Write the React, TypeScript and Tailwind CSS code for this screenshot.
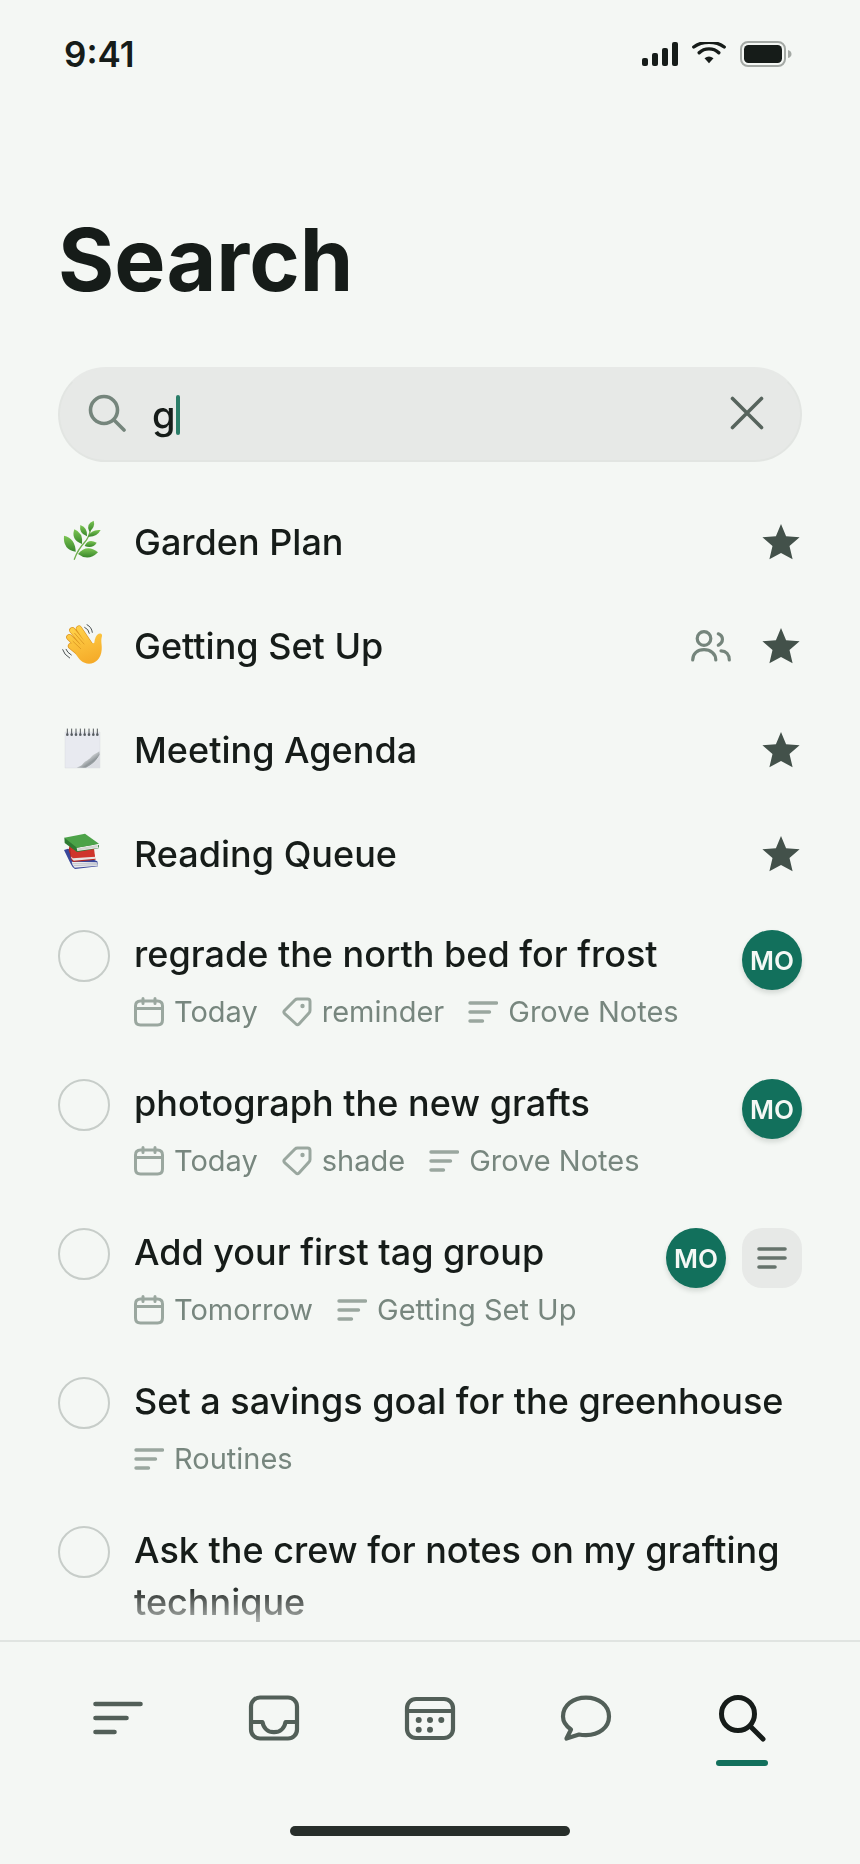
import { useState } from 'react'
import type { ReactNode } from 'react'

type MetaKind = 'date' | 'tag' | 'list'

interface Doc {
  title: string
  icon: ReactNode
  shared?: boolean
}

interface Task {
  title: string
  meta: { kind: MetaKind; label: string }[]
  assignee?: string
  hasNote?: boolean
}

function HerbIcon() {
  return (
    <svg viewBox="0 0 132 132" className="size-11" aria-hidden="true">
      <defs>
        <linearGradient id="leaf" x1="0" y1="0" x2="0" y2="1">
          <stop offset="0" stopColor="#7cc653" />
          <stop offset="1" stopColor="#37852a" />
        </linearGradient>
      </defs>
      <path d="M43 118Q54 88 74 67Q86 54 92 28" fill="none" stroke="#6fae4c" strokeWidth="4" strokeLinecap="round" />
      <g fill="url(#leaf)">
        <path d="M88 35Q76 12 101 2Q107 20 88 35Z" />
        <path d="M84 50Q94 27 122 30Q110 52 84 50Z" />
        <path d="M81 49Q56 40 61 15Q84 24 81 49Z" />
        <path d="M66 72Q32 60 43 28Q70 38 66 72Z" />
        <path d="M47 95Q8 88 12 47Q46 55 47 95Z" />
        <path d="M74 78Q84 55 110 68Q98 87 74 78Z" />
        <path d="M54 102Q80 70 114 97Q85 126 54 102Z" />
      </g>
    </svg>
  )
}

function WaveIcon() {
  return (
    <svg viewBox="0 0 132 132" className="size-11" aria-hidden="true">
      <defs>
        <linearGradient id="hand" gradientUnits="userSpaceOnUse" x1="50" y1="5" x2="90" y2="120">
          <stop offset="0" stopColor="#ffd24a" />
          <stop offset="1" stopColor="#f5aa28" />
        </linearGradient>
      </defs>
      <g fill="none" strokeLinecap="round">
        <path d="M57 14L92 66M37 19L80 72M28 40L72 84M33 66L74 100" stroke="#dd9620" strokeWidth="19" />
        <path d="M57 14L92 66M37 19L80 72M28 40L72 84M33 66L74 100" stroke="url(#hand)" strokeWidth="15" />
      </g>
      <path d="M60 62L86 50Q95 63 103 56Q105 35 116 29Q127 26 126 36C121 53 127 62 125 78C123 103 107 119 87 119C68 119 56 105 47 90Z" fill="url(#hand)" />
      <path d="M44 28L72 60M39 52L62 74" fill="none" stroke="#e09d26" strokeWidth="3" strokeLinecap="round" />
      <g fill="none" stroke="#4b5152" strokeWidth="3" strokeLinecap="round">
        <path d="M81 2Q95 9 97 25M74 10Q86 15 88 28M8 77Q12 92 29 102M18 76Q21 85 34 93" />
      </g>
    </svg>
  )
}

function NotepadIcon() {
  const rings = [22, 35, 48, 61, 74, 87, 100, 112]
  return (
    <svg viewBox="0 0 132 132" className="size-11" aria-hidden="true">
      <defs>
        <linearGradient id="curl" x1="0" y1="0" x2="1" y2="1">
          <stop offset="0.3" stopColor="#f9fafc" />
          <stop offset="0.65" stopColor="#8f9699" />
          <stop offset="1" stopColor="#e3e5e9" />
        </linearGradient>
      </defs>
      <path d="M15 12H120V120H15Z" fill="#e8eaf0" stroke="#d5d8de" strokeWidth="1" />
      <path d="M118 70C108 78 102 78 96 84C88 96 76 98 70 106C65 114 58 116 50 119H78C96 112 112 94 119 80Z" fill="url(#curl)" />
      <path d="M119 82C110 98 96 112 80 120H120Z" fill="#dcdee3" />
      {rings.map((x) => (
        <g key={x}>
          <circle cx={x} cy="20" r="4" fill="#5d6368" />
          <path d={`M${x} 3V19`} stroke="#53585c" strokeWidth="3" strokeLinecap="round" />
        </g>
      ))}
    </svg>
  )
}

function BooksIcon() {
  return (
    <svg viewBox="0 0 132 132" className="size-11" aria-hidden="true">
      <path d="M12 54L24 50L112 88L114 103L45 111Q38 108 32 95Z" fill="#39479a" />
      <path d="M35 89L110 91L114 101L44 107Q36 98 35 89Z" fill="#e9eaec" />
      <path d="M37 95L111 95M41 101L112 98" stroke="#abb0bc" strokeWidth="2" />
      <path d="M29 39L98 50L107 83L40 90Q31 84 31 70L26 54Z" fill="#b72822" />
      <path d="M33 74L104 73L107 80L41 86Q34 82 33 74Z" fill="#e8e4e1" />
      <path d="M29 39L102 49L105 74L38 79Q31 72 33 64Z" fill="#cf352b" />
      <path d="M13 17L14 33L51 60L116 49L117 40Z" fill="#2f7a31" />
      <path d="M50 47L115 36Q111 43 116 48L52 57Z" fill="#eceeea" />
      <path d="M52 51L112 41M52 54L113 44" stroke="#b6bab5" strokeWidth="1.5" />
      <path d="M13 17L75 5L117 35L51 47Z" fill="#4ca348" />
    </svg>
  )
}

function StarIcon() {
  return (
    <svg viewBox="0 0 38 38" className="size-9.5 text-[#43514a]" aria-hidden="true">
      <path d="M19 1L24.1 13.2L37.6 14.2L27.5 22.9L30.6 36.2L19 30L7.4 36.2L10.5 22.9L0.4 14.2L13.9 13.2Z" fill="currentColor" />
    </svg>
  )
}

function PeopleIcon() {
  return (
    <svg viewBox="0 0 40 32" className="h-8 w-10 text-[#75857c]" fill="none" stroke="currentColor" strokeWidth="3.2" strokeLinecap="round" aria-hidden="true">
      <circle cx="13" cy="8.5" r="6.8" />
      <path d="M1.7 30C1.7 23.5 6.5 19.7 13 19.7S24.8 23.5 24.8 30" />
      <path d="M27.3 3.8C32.8 6 32.8 12.5 27.3 15.2M30 20.8C35 21 38.3 24.5 38.3 30" />
    </svg>
  )
}

function MetaIcon({ kind }: { kind: MetaKind }) {
  return (
    <svg
      viewBox="0 0 30 30"
      className="size-7.5 shrink-0 text-[#9aa79f]"
      fill="none"
      stroke="currentColor"
      strokeWidth="3"
      strokeLinecap="round"
      strokeLinejoin="round"
      aria-hidden="true"
    >
      {kind === 'date' && <path d="M6.5 4H23.5Q28.5 4 28.5 9V23Q28.5 28 23.5 28H6.5Q1.5 28 1.5 23V9Q1.5 4 6.5 4ZM1.5 11.5H28.5M9 1.5V6.5M21 1.5V6.5" />}
      {kind === 'tag' && (
        <>
          <path d="M15.5 2H25.5Q28 2 28 4.5V13.5Q28 15 27 16L17 27Q15.5 28.6 14 27L2.6 16.6Q1.2 15 2.6 13.5L13 3Q14 2 15.5 2Z" />
          <circle cx="20.5" cy="9" r="2.2" fill="currentColor" stroke="none" />
        </>
      )}
      {kind === 'list' && <path d="M2 6H28.5M2 15H21.5M2 24H14.5" strokeWidth="3.4" />}
    </svg>
  )
}

const DOCS: Doc[] = [
  { title: 'Garden Plan', icon: <HerbIcon /> },
  { title: 'Getting Set Up', icon: <WaveIcon />, shared: true },
  { title: 'Meeting Agenda', icon: <NotepadIcon /> },
  { title: 'Reading Queue', icon: <BooksIcon /> },
]

const TASKS: Task[] = [
  {
    title: 'regrade the north bed for frost',
    meta: [
      { kind: 'date', label: 'Today' },
      { kind: 'tag', label: 'reminder' },
      { kind: 'list', label: 'Grove Notes' },
    ],
    assignee: 'MO',
  },
  {
    title: 'photograph the new grafts',
    meta: [
      { kind: 'date', label: 'Today' },
      { kind: 'tag', label: 'shade' },
      { kind: 'list', label: 'Grove Notes' },
    ],
    assignee: 'MO',
  },
  {
    title: 'Add your first tag group',
    meta: [
      { kind: 'date', label: 'Tomorrow' },
      { kind: 'list', label: 'Getting Set Up' },
    ],
    assignee: 'MO',
    hasNote: true,
  },
  { title: 'Set a savings goal for the greenhouse', meta: [{ kind: 'list', label: 'Routines' }] },
  { title: 'Ask the crew for notes on my grafting technique', meta: [] },
]

const TABS: { name: string; icon: ReactNode }[] = [
  { name: 'Lists', icon: <path d="M3.5 10H48.5M3.5 24H34.5M3.5 38H22.5" strokeWidth="4.6" /> },
  {
    name: 'Inbox',
    icon: (
      <>
        <rect x="3" y="3.5" width="46" height="41" rx="9" />
        <path d="M3 28H14.5C15.5 34.5 20 38.2 26 38.2S36.5 34.5 37.5 28H49" />
      </>
    ),
  },
  {
    name: 'Calendar',
    icon: (
      <>
        <rect x="3" y="5" width="46" height="39" rx="9" />
        <path d="M3 17H49" />
        <g fill="currentColor" stroke="none">
          <circle cx="14.7" cy="26" r="3" />
          <circle cx="26" cy="26" r="3" />
          <circle cx="37.3" cy="26" r="3" />
          <circle cx="14.7" cy="35.7" r="3" />
          <circle cx="26" cy="35.7" r="3" />
        </g>
      </>
    ),
  },
  {
    name: 'Chat',
    icon: <path d="M11 35.5C6 32 3 27.5 3 22.5C3 11.5 13 3.7 26 3.7S49 11.5 49 22.5S39 41.2 26 41.2C23.5 41.2 21 41 19 40.5L6.5 44.5Z" />,
  },
  {
    name: 'Search',
    icon: (
      <>
        <circle cx="22" cy="20" r="16.5" strokeWidth="5" />
        <path d="M35 33L47 45" strokeWidth="5" />
      </>
    ),
  },
]

function StatusBar() {
  return (
    <header className="flex h-27 shrink-0 items-center justify-between pl-16 pr-17">
      <span className="text-[35px] font-semibold leading-10">9:41</span>
      <div className="flex items-center gap-3.5">
        <svg viewBox="0 0 36 24" className="h-6 w-9" fill="currentColor" aria-hidden="true">
          <rect x="0" y="16" width="6" height="8" rx="2" />
          <rect x="10" y="11" width="6" height="13" rx="2" />
          <rect x="20" y="6" width="6" height="18" rx="2" />
          <rect x="30" y="0" width="6" height="24" rx="2" />
        </svg>
        <svg viewBox="0 0 34 24" className="h-6 w-8.5" fill="none" stroke="currentColor" strokeWidth="3.4" strokeLinecap="round" aria-hidden="true">
          <path d="M1.8 5C10 -1.2 24 -1.2 32.2 5M7.2 10.8C12.5 5.5 21.5 5.5 26.8 10.8" />
          <path d="M12.5 16.2Q17 12.6 21.5 16.2L17 21.3Z" fill="currentColor" stroke="none" />
        </svg>
        <svg viewBox="0 0 52 26" className="h-6.5 w-13" fill="none" aria-hidden="true">
          <rect x="1" y="1" width="44" height="24" rx="7" stroke="#a4a9a5" strokeWidth="2" />
          <rect x="4" y="4" width="38" height="18" rx="4.5" fill="currentColor" />
          <path d="M48 9Q51.5 10 51.5 13T48 17Z" fill="#a4a9a5" />
        </svg>
      </div>
    </header>
  )
}

function SearchField() {
  const [query, setQuery] = useState('g')
  return (
    <div className="mt-[59px] flex h-[95px] items-center rounded-full border-2 border-[#e2e5e2] border-t-[#e7e9e7] bg-[#e7e9e7] pl-7 pr-[35px]">
      <label htmlFor="query" aria-label="Search" className="-mt-1 shrink-0 text-[#75857c]">
        <svg viewBox="0 0 38 38" className="size-9.5" fill="none" stroke="currentColor" strokeWidth="3.6" strokeLinecap="round" aria-hidden="true">
          <circle cx="16" cy="16" r="13.5" />
          <path d="M26 26L36 36" />
        </svg>
      </label>
      <div className="ml-6.5 flex flex-1 items-center">
        <input
          id="query"
          type="text"
          aria-label="Search"
          value={query}
          onChange={(e) => setQuery(e.target.value)}
          className="field-sizing-content bg-transparent text-[38px] font-medium leading-14 caret-transparent outline-none"
        />
        <span className="h-10 w-1 rounded-full bg-[#2a7d68]" />
      </div>
      <button type="button" aria-label="Clear" onClick={() => setQuery('')} className="-mt-1 text-[#57645d]">
        <svg viewBox="0 0 36 36" className="size-9" fill="none" stroke="currentColor" strokeWidth="3.6" strokeLinecap="round" aria-hidden="true">
          <path d="M3.5 3.5L32.5 32.5M32.5 3.5L3.5 32.5" />
        </svg>
      </button>
    </div>
  )
}

function DocRow({ doc }: { doc: Doc }) {
  return (
    <li>
      <a href="#doc" className="flex h-26 items-center pl-0.5 pr-0.5">
        {doc.icon}
        <span className="ml-7.5 flex-1 text-[36px] font-medium leading-13">{doc.title}</span>
        <span className="flex items-center gap-[31px]">
          {doc.shared && <PeopleIcon />}
          <StarIcon />
        </span>
      </a>
    </li>
  )
}

function TaskRow({ task, id }: { task: Task; id: string }) {
  return (
    <li className="flex items-start pb-[45px]">
      <input
        id={id}
        type="checkbox"
        className="mt-0.5 size-13 shrink-0 appearance-none rounded-full border-2 border-[#c7cdc9] checked:bg-[#12705c]"
      />
      <div className="ml-6 min-w-0 flex-1">
        <label htmlFor={id} className="block text-[36px] font-medium leading-13">
          {task.title}
        </label>
        {task.meta.length > 0 && (
          <div className="mt-3 flex gap-6 text-[29px] leading-10 text-[#77867e]">
            {task.meta.map((m) => (
              <span key={m.kind} className="flex items-center gap-2.5 whitespace-nowrap">
                <MetaIcon kind={m.kind} />
                {m.label}
              </span>
            ))}
          </div>
        )}
      </div>
      {task.assignee && (
        <span className="mt-0.5 flex size-15 shrink-0 items-center justify-center rounded-full bg-[#12705c] text-[26px] font-semibold text-[#f4f8f5] shadow-[0_3px_5px_rgba(20,40,30,0.15)]">
          {task.assignee}
        </span>
      )}
      {task.hasNote && (
        <button type="button" aria-label="Open note" className="ml-4 mt-0.5 flex size-15 shrink-0 items-center justify-center rounded-[20px] bg-[#e7e9e7] text-[#66736c]">
          <svg viewBox="0 0 30 24" className="h-6 w-7.5" fill="none" stroke="currentColor" strokeWidth="3.6" strokeLinecap="round" aria-hidden="true">
            <path d="M2 3H28M2 12H28M2 21H18" />
          </svg>
        </button>
      )}
    </li>
  )
}

export default function App() {
  return (
    <div className="flex h-screen flex-col overflow-hidden bg-[#f4f7f4] font-[Inter,sans-serif] text-[#161c19]">
      <StatusBar />
      <main className="min-h-0 flex-1 overflow-hidden px-14.5 pt-26 [mask-image:linear-gradient(to_bottom,black_calc(100%-56px),transparent)]">
        <h1 className="text-[86px] font-bold leading-24">Search</h1>
        <SearchField />
        <ul className="mt-7">
          {DOCS.map((doc) => (
            <DocRow key={doc.title} doc={doc} />
          ))}
        </ul>
        <ul className="pt-[22px]">
          {TASKS.map((task, i) => (
            <TaskRow key={task.title} task={task} id={`task-${i}`} />
          ))}
        </ul>
      </main>
      <footer className="shrink-0 border-t-2 border-[#e0e4e1] pb-7">
        <nav className="flex px-10 pt-13">
          {TABS.map((tab) => {
            const active = tab.name === 'Search'
            return (
              <button
                key={tab.name}
                type="button"
                aria-label={tab.name}
                className={`flex flex-1 flex-col items-center gap-4.5 ${active ? 'text-[#161c19]' : 'text-[#525f58]'}`}
              >
                <svg viewBox="0 0 52 48" className="h-12 w-13" fill="none" stroke="currentColor" strokeWidth="4.2" strokeLinecap="round" strokeLinejoin="round" aria-hidden="true">
                  {tab.icon}
                </svg>
                <span className={`h-1.5 w-13 rounded-full ${active ? 'bg-[#12705c]' : ''}`} />
              </button>
            )
          })}
        </nav>
        <div className="mx-auto mt-15 h-2.5 w-70 rounded-full bg-[#272e2a]" />
      </footer>
    </div>
  )
}
